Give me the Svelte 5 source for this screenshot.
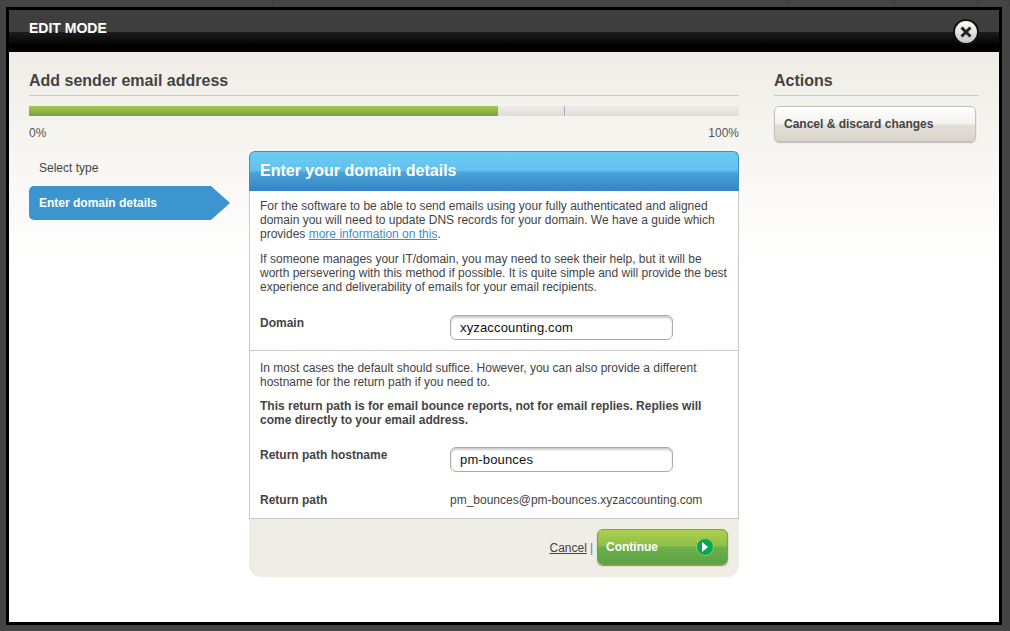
<script>
  const cells = [273, 515, 107, 83, 32];
</script>

<div class="page">
  <div class="strip">
    {#each cells as w}
      <span class="cell" style="width:{w}px"></span>
    {/each}
  </div>
  <div class="frame">
    <header class="head">
      <span class="mode">EDIT MODE</span>
      <button class="close" aria-label="Close">
        <svg width="16" height="16" viewBox="0 0 16 16"><path d="M3.5 3.5l9 9M12.500 3.500l-9 9" stroke="#222" stroke-width="3" fill="none"/></svg>
      </button>
    </header>
    <div class="content">
      <main class="main">
        <h2>Add sender email address</h2>
        <div class="track">
          <div class="fill"></div>
          <div class="tick"></div>
        </div>
        <div class="scale"><span>0%</span><span>100%</span></div>
        <div class="wizard">
          <nav class="steps">
            <div class="step">Select type</div>
            <div class="step active">
              Enter domain details
              <svg class="arrow" width="20" height="34" viewBox="0 0 20 34"><path d="M0 0L1 0L20 17L1 34L0 34Z" fill="#3d95d0"/></svg>
            </div>
          </nav>
          <section class="panel">
            <h3>Enter your domain details</h3>
            <div class="block first">
              <p>For the software to be able to send emails using your fully authenticated and aligned domain you will need to update DNS records for your domain. We have a guide which provides <a href="#more">more information on this</a>.</p>
              <p>If someone manages your IT/domain, you may need to seek their help, but it will be worth persevering with this method if possible. It is quite simple and will provide the best experience and deliverability of emails for your email recipients.</p>
              <div class="row domain">
                <span class="label">Domain</span>
                <input value="xyzaccounting.com" />
              </div>
            </div>
            <div class="block second">
              <p class="intro">In most cases the default should suffice. However, you can also provide a different hostname for the return path if you need to.</p>
              <p><strong>This return path is for email bounce reports, not for email replies. Replies will come directly to your email address.</strong></p>
              <div class="row host">
                <span class="label">Return path hostname</span>
                <input value="pm-bounces" />
              </div>
              <div class="row path">
                <span class="label">Return path</span>
                <span class="value">pm_bounces@pm-bounces.xyzaccounting.com</span>
              </div>
            </div>
            <footer class="foot">
              <a href="#cancel">Cancel</a><span class="sep">|</span>
              <button class="go">
                Continue
                <span class="disc">
                  <svg width="8" height="10" viewBox="0 0 8 10"><path d="M1 0L7 5L1 10Z" fill="#fff"/></svg>
                </span>
              </button>
            </footer>
          </section>
        </div>
      </main>
      <aside class="side">
        <h2>Actions</h2>
        <button class="discard">Cancel &amp; discard changes</button>
      </aside>
    </div>
  </div>
</div>

<style>
  :global(body) {
    margin: 0;
    background: #444;
  }
  .page {
    width: 1010px;
    height: 631px;
    overflow: hidden;
    font-family: "Liberation Sans", Arial, sans-serif;
    font-size: 12px;
    color: #444;
  }
  .strip {
    display: flex;
    height: 7px;
  }
  .cell {
    display: block;
    flex: none;
    box-sizing: border-box;
    border-right: 1px solid #3a3a3a;
    height: 7px;
  }
  .frame {
    width: 990px;
    height: 612px;
    margin-left: 6px;
    border: 3px solid #000;
    background: #fff;
    display: flex;
    flex-direction: column;
  }
  .head {
    height: 42px;
    flex: none;
    position: relative;
    box-sizing: border-box;
    padding: 10px 0 0 20px;
    background: linear-gradient(#3e3e3e 0, #3e3e3e 22px, #1d1d1d 22px, #000 36px, #000 100%);
  }
  .mode {
    color: #fff;
    font-size: 14px;
    font-weight: bold;
    line-height: 16px;
    display: block;
  }
  .close {
    position: absolute;
    left: 944px;
    top: 9px;
    padding: 0;
    border-radius: 50%;
    border: 2px solid #111;
    background: linear-gradient(#fff, #c9c7c2);
    display: flex;
    align-items: center;
    justify-content: center;
    box-sizing: content-box;
    width: 22px;
    height: 22px;
  }
  .content {
    flex: 1;
    display: flex;
    gap: 35px;
    padding: 0 20px;
    background: linear-gradient(#f0ede6 0, #fff 210px);
  }
  .main {
    width: 710px;
    flex: none;
  }
  .side {
    width: 205px;
    flex: none;
  }
  h2 {
    margin: 0;
    height: 44px;
    box-sizing: border-box;
    padding-top: 19px;
    line-height: 20px;
    font-size: 16px;
    font-weight: bold;
    color: #444;
    border-bottom: 1px solid #ccc8c0;
  }
  .track {
    margin-top: 10px;
    height: 10px;
    position: relative;
    background: linear-gradient(#ecebe8, #dfdedb);
  }
  .fill {
    width: 469px;
    height: 100%;
    background: linear-gradient(#a3cb4e, #7c9f3f);
  }
  .tick {
    position: absolute;
    left: 535px;
    top: 0;
    width: 1px;
    height: 100%;
    background: #aaa;
  }
  .scale {
    display: flex;
    justify-content: space-between;
    margin-top: 10px;
    line-height: 14px;
    color: #555;
  }
  .wizard {
    display: flex;
    margin-top: 11px;
  }
  .steps {
    width: 220px;
    flex: none;
  }
  .step {
    height: 34px;
    line-height: 34px;
    padding-left: 10px;
    position: relative;
  }
  .step.active {
    width: 171px;
    background: #3d95d0;
    color: #fff;
    font-weight: bold;
    border-radius: 5px 0 0 5px;
    margin-top: 1px;
  }
  .arrow {
    position: absolute;
    left: 181px;
    top: 0;
  }
  .panel {
    width: 490px;
    flex: none;
  }
  h3 {
    margin: 0;
    height: 40px;
    box-sizing: border-box;
    line-height: 38px;
    padding-left: 10px;
    font-size: 16px;
    color: #fff;
    border-radius: 6px 6px 0 0;
    border: solid #3a8ccb;
    border-width: 1px 1px 0;
    background: linear-gradient(#6ccdf7 0, #62bfed 19px, #4ba4da 20px, #3684c4 100%);
  }
  .block {
    background: #fff;
    border: solid #c8c8c8;
    border-width: 0 1px 1px;
    padding: 0 10px;
    box-sizing: border-box;
  }
  .first {
    height: 160px;
    padding-top: 8px;
  }
  .second {
    height: 168px;
    padding-top: 10px;
  }
  p {
    margin: 0 0 11px;
    line-height: 14px;
    color: #444;
  }
  p.intro {
    margin-bottom: 10px;
  }
  p a {
    color: #3d8fc6;
  }
  strong {
    color: #444;
  }
  .row {
    display: flex;
    align-items: flex-start;
  }
  .label {
    width: 190px;
    flex: none;
    font-weight: bold;
    line-height: 14px;
  }
  .domain {
    margin-top: 21px;
  }
  .domain .label,
  .host .label {
    padding-top: 1px;
  }
  .host {
    margin-top: 20px;
  }
  .path {
    margin-top: 21px;
  }
  .value {
    line-height: 14px;
  }
  input {
    width: 223px;
    height: 25px;
    box-sizing: border-box;
    border: 1px solid #aaa;
    border-radius: 6px;
    padding: 0 9px;
    font: 13px "Liberation Sans", Arial, sans-serif;
    letter-spacing: 0.15px;
    color: #111;
    background: #fff;
    box-shadow: inset 0 2px 2px #ccc;
    outline: none;
  }
  .foot {
    height: 58px;
    box-sizing: border-box;
    padding: 10px 11px 0 0;
    background: #f0ede6;
    border-radius: 0 0 12px 12px;
    display: flex;
    justify-content: flex-end;
    align-items: flex-start;
  }
  .foot a {
    color: #444;
    line-height: 38px;
  }
  .sep {
    line-height: 38px;
    margin: 0 4px 0 3px;
    color: #777;
  }
  .go {
    width: 131px;
    height: 36px;
    padding: 0 0 0 8px;
    border: 1px solid #7d9f45;
    border-radius: 6px;
    background: linear-gradient(#abd04e 0, #8fbf4b 16px, #6eb04a 17px, #5aa245 100%);
    box-shadow: 0 1px 1px #888;
    color: #fff;
    font: bold 12px "Liberation Sans", Arial, sans-serif;
    text-align: left;
    display: flex;
    align-items: center;
    justify-content: space-between;
  }
  .disc {
    width: 16px;
    height: 16px;
    margin-right: 13px;
    border-radius: 50%;
    background: #06a650;
    border: 1px solid #9ccb55;
    display: flex;
    align-items: center;
    justify-content: center;
  }
  .discard {
    display: block;
    width: 202px;
    height: 36px;
    margin-top: 10px;
    padding: 0 0 1px 9px;
    border: 1px solid #c4c1b9;
    border-radius: 5px;
    background: linear-gradient(#fff 0, #f4f2ee 17px, #e2dfd7 18px, #d9d5cb 100%);
    box-shadow: 0 1px 1px #bbb;
    color: #444;
    font: bold 12px "Liberation Sans", Arial, sans-serif;
    text-align: left;
  }
</style>
